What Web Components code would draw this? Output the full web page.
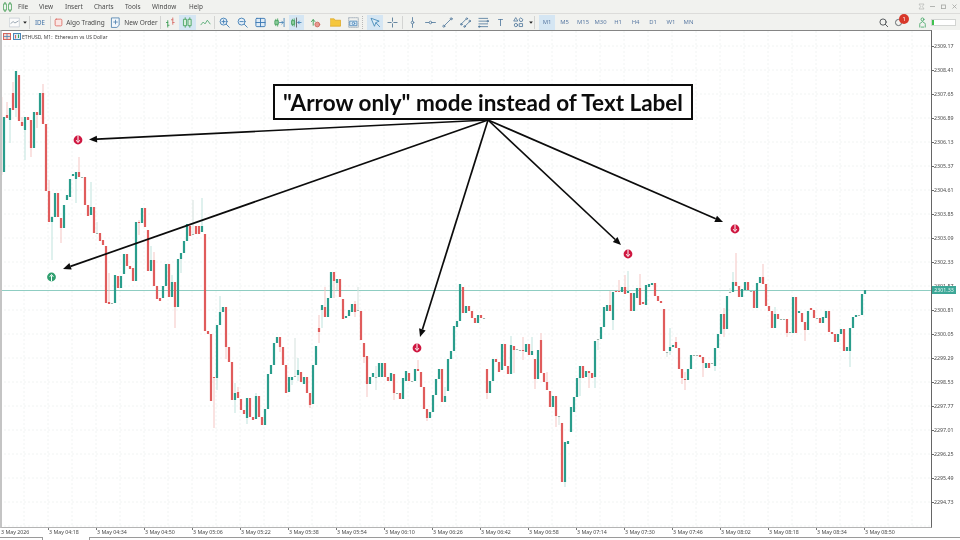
<!DOCTYPE html>
<html lang="en">
<head>
<meta charset="utf-8">
<title>ETHUSD M1</title>
<style>
  html, body { margin: 0; padding: 0; background: #fff; }
  body { font-family: "Noto Sans", "Liberation Sans", sans-serif; }
</style>
</head>
<body>
<mt-app>
  <mt-menubar></mt-menubar>
  <mt-toolbar></mt-toolbar>
  <mt-chart>
    <chart-note slot="note">"Arrow only" mode instead of Text Label</chart-note>
  </mt-chart>
  <mt-statusbar></mt-statusbar>
</mt-app>

<script>
class MtApp extends HTMLElement {
  constructor() {
    super();
    this.attachShadow({ mode: "open" });
    this.shadowRoot.innerHTML = `
      <style>
        :host { display: flex; flex-direction: column; width: 960px; height: 540px; overflow: hidden; background: #fff; filter: blur(.3px); }
      </style>
      <slot></slot>
    `;
  }
}

class MtMenubar extends HTMLElement {
  constructor() {
    super();
    this.attachShadow({ mode: "open" });
    this.shadowRoot.innerHTML = `
      <style>
        :host { display: flex; align-items: center; height: 13px; background: #f1f2ef; font: 6.4px "Noto Sans", "Liberation Sans", sans-serif; color: #4a4a4a; }
        .logo { width: 9px; height: 10px; margin: 0 6px 0 3px; }
        span { display: block; }
        .ctl { margin-left: auto; display: flex; align-items: center; }
        .ctl svg { width: 7px; height: 7px; margin-right: 4px; }
      </style>
      <svg class="logo" viewBox="0 0 9 10">
        <path d="M2 0v10M7 0v10" stroke="#3f9a4f" stroke-width="1"/>
        <rect x="0.7" y="2" width="2.6" height="6" fill="#fff" stroke="#3f9a4f" stroke-width=".8"/>
        <rect x="5.7" y="2" width="2.6" height="6" fill="#fff" stroke="#3f9a4f" stroke-width=".8"/>
      </svg>
      <span style="width:21px">File</span>
      <span style="width:26px">View</span>
      <span style="width:29px">Insert</span>
      <span style="width:31px">Charts</span>
      <span style="width:27px">Tools</span>
      <span style="width:37px">Window</span>
      <span>Help</span>
      <div class="ctl">
        <svg viewBox="0 0 7 7" fill="none" stroke="#b5b7b4" stroke-width=".7"><path d="M1 1h5L4.4 3.5 6 6H1l1.6-2.5z"/></svg>
        <svg viewBox="0 0 7 7" fill="none" stroke="#a3a5a2" stroke-width=".8"><path d="M1 3.5h5"/></svg>
        <svg viewBox="0 0 7 7" fill="none" stroke="#a3a5a2" stroke-width=".8"><rect x="1.5" y="2" width="4" height="3.6"/></svg>
        <svg viewBox="0 0 7 7" fill="none" stroke="#a3a5a2" stroke-width=".8" style="margin-right:2px"><path d="M1.5 1.5l4 4M5.5 1.5l-4 4"/></svg>
      </div>
    `;
  }
}

class ToolBtn extends HTMLElement {
  constructor() {
    super();
    this.attachShadow({ mode: "open" });
    this.shadowRoot.innerHTML = `
      <style>
        :host { display: flex; align-items: center; justify-content: center; gap: 3px; flex: none; height: 15px; box-sizing: border-box; font: 6.5px "Noto Sans", "Liberation Sans", sans-serif; color: #4a4a4a; white-space: nowrap; }
        :host([active]) { background: #d5e6f3; }
        :host([tf]) { font-size: 5.9px; color: #5a7aa3; }
      </style>
      <slot></slot>
    `;
  }
  connectedCallback() {
    this.style.width = this.getAttribute("w") + "px";
  }
}

class MtToolbar extends HTMLElement {
  constructor() {
    super();
    this.attachShadow({ mode: "open" });
    this.shadowRoot.innerHTML = `
      <style>
        :host { display: flex; align-items: center; height: 17px; padding: 0 4px 0 7px; box-sizing: border-box; background: #f1f2ef; border-top: 1px solid #dcdcda; }
        .sep { flex: none; width: 1px; height: 13px; background: #d3d4d2; }
        .dots { flex: none; width: 0; height: 13px; border-left: 1px dotted #b8b8b8; }
        svg { display: block; width: 11px; height: 11px; flex: none; fill: none; stroke-linecap: round; stroke-linejoin: round; }
        .right { margin-left: auto; display: flex; align-items: center; }
        .progress { width: 25px; height: 7px; box-sizing: border-box; border: 1px solid #d2d4d2; background: #fff; margin-left: 3px; display: flex; }
        .progress i { width: 2px; background: #3fc24e; }
        .chat { position: relative; width: 16px; height: 12px; margin: 0 7px 0 5px; }
        .chat svg { position: absolute; left: 0; top: 1px; }
        .badge { position: absolute; left: 5px; top: -2px; width: 10px; height: 10px; border-radius: 50%; background: #d8382a; color: #fff; font-size: 5.6px; line-height: 10px; text-align: center; }
      </style>
      <tool-btn w="22">
        <svg viewBox="0 0 12 12" stroke="#7f96ad" stroke-width=".8"><rect x=".7" y="1.2" width="10.6" height="9.6" fill="#fbfbfb" stroke="#c3cad2"/><path d="M2 7l2.5-2 2 1.5L10 4.5" stroke="#7a8a99"/></svg>
        <svg viewBox="0 0 4 12" style="width:4px"><path d="M0 5h4L2 7.4z" fill="#222"/></svg>
      </tool-btn>
      <i class="sep"></i>
      <tool-btn w="20" style="color:#3f70a6;font-size:6.2px">IDE</tool-btn>
      <i class="sep"></i>
      <tool-btn w="57">
        <svg viewBox="0 0 12 12" style="width:9px;height:9px"><rect x="1.5" y="1.5" width="9" height="9" rx="1.5" fill="#fbe6e4" stroke="#dd6a62" stroke-width="1.1"/></svg>
        Algo Trading
      </tool-btn>
      <tool-btn w="52">
        <svg viewBox="0 0 12 12" stroke="#4d7fae" stroke-width=".9"><path d="M2 1h8v8l-2.5 2.4H2z" fill="#f2f7fb"/><path d="M6 3.5v4M4 5.5h4"/></svg>
        New Order
      </tool-btn>
      <i class="sep"></i>
      <tool-btn w="18">
        <svg viewBox="0 0 12 12" stroke-width="1"><path d="M3 4v7M1.6 6H3M3 9h1.4" stroke="#3f9f57"/><path d="M8.5 1v7M7 3h1.5M8.5 6H10" stroke="#d9736c"/></svg>
      </tool-btn>
      <tool-btn w="17" active>
        <svg viewBox="0 0 12 12" stroke="#3f9f57" stroke-width=".9"><path d="M3.5 .8v10.4M8.5 .8v10.4"/><rect x="2" y="2.5" width="3" height="7" fill="#d8efdc"/><rect x="7" y="2.5" width="3" height="7" fill="#d8efdc"/></svg>
      </tool-btn>
      <tool-btn w="18">
        <svg viewBox="0 0 12 12" stroke-width=".9"><path d="M1 8.5l2.5-3L5.5 7.5 8 3.5 11 7.5" stroke="#4aa66b"/></svg>
      </tool-btn>
      <i class="sep"></i>
      <tool-btn w="18">
        <svg viewBox="0 0 12 12" stroke="#4480b5" stroke-width="1"><circle cx="5" cy="5" r="3.8" fill="#e6f0f8"/><path d="M8 8l3.2 3.2M3.2 5h3.6M5 3.2v3.6"/></svg>
      </tool-btn>
      <tool-btn w="18">
        <svg viewBox="0 0 12 12" stroke="#4480b5" stroke-width="1"><circle cx="5" cy="5" r="3.8" fill="#e6f0f8"/><path d="M8 8l3.2 3.2M3.2 5h3.6"/></svg>
      </tool-btn>
      <tool-btn w="18">
        <svg viewBox="0 0 12 12" stroke="#3b78b3" stroke-width="1"><rect x="1" y="1.5" width="10" height="9" rx="1" fill="#dfecf6"/><path d="M6 1.5v9M1 6h10"/></svg>
      </tool-btn>
      <tool-btn w="20">
        <svg viewBox="0 0 12 12" stroke-width=".9"><path d="M2 2.5v7M4 2v8" stroke="#3f9f57"/><rect x="1.3" y="4" width="3.4" height="4" fill="#8fce9f" stroke="#3f9f57"/><path d="M11 1.5v9M6 6h4M8.5 4.5L10 6 8.5 7.5" stroke="#3f7fb5"/></svg>
      </tool-btn>
      <tool-btn w="15" active>
        <svg viewBox="0 0 12 12" stroke-width=".9"><path d="M1.5 2.5v7M3.5 2v8" stroke="#3f9f57"/><rect x="1" y="4" width="3" height="4" fill="#8fce9f" stroke="#3f9f57"/><path d="M6 1v10" stroke="#555"/><path d="M11 6H7.5M9 4.5L7.5 6 9 7.5" stroke="#3f7fb5"/></svg>
      </tool-btn>
      <tool-btn w="22">
        <svg viewBox="0 0 12 12" stroke-width="1"><path d="M3.5 9V3M1.6 5L3.5 2.8 5.4 5" stroke="#3f9f57"/><circle cx="8" cy="8.2" r="2.6" fill="#e79a8f" stroke="#cf6a60"/></svg>
      </tool-btn>
      <tool-btn w="18">
        <svg viewBox="0 0 12 12"><path d="M.5 2h4l1 1.5h6V10H.5z" fill="#f5c73d" stroke="#dba520" stroke-width=".8"/></svg>
      </tool-btn>
      <tool-btn w="18">
        <svg viewBox="0 0 12 12" stroke="#4a86b8" stroke-width=".9"><rect x=".8" y=".8" width="10.4" height="10.4" stroke="#9aa8b5" stroke-dasharray="1 1"/><rect x="2.3" y="4.5" width="7.4" height="5" fill="#dcebf6"/><circle cx="6" cy="7" r="1.4"/></svg>
      </tool-btn>
      <i class="dots"></i>
      <tool-btn w="16" active style="margin-left:4px">
        <svg viewBox="0 0 12 12" stroke="#3e85b5" stroke-width=".9"><path d="M1.5 1.5l8.5 3-3.6 1.6-1.4 3.6z" fill="#dcecf7"/><path d="M6.6 6.4L10.5 10.5"/></svg>
      </tool-btn>
      <tool-btn w="19">
        <svg viewBox="0 0 12 12" stroke="#49708f" stroke-width=".9"><path d="M6 1v3.6M6 7.4V11M1 6h3.6M7.4 6H11"/></svg>
      </tool-btn>
      <i class="sep"></i>
      <tool-btn w="18">
        <svg viewBox="0 0 12 12" stroke="#50789c" stroke-width=".9"><path d="M6 .6v10.8"/><circle cx="6" cy="6" r="1.4" fill="#f1f2ef"/></svg>
      </tool-btn>
      <tool-btn w="18">
        <svg viewBox="0 0 12 12" stroke="#50789c" stroke-width=".9"><path d="M.6 6h10.8"/><circle cx="6" cy="6" r="1.4" fill="#f1f2ef"/></svg>
      </tool-btn>
      <tool-btn w="17">
        <svg viewBox="0 0 12 12" stroke="#50789c" stroke-width=".9"><path d="M2 10L10 2"/><circle cx="2" cy="10" r="1.1" fill="#f1f2ef"/><circle cx="10" cy="2" r="1.1" fill="#f1f2ef"/></svg>
      </tool-btn>
      <tool-btn w="18">
        <svg viewBox="0 0 12 12" stroke="#50789c" stroke-width=".9"><path d="M1.5 7.5l5-5M5.5 10l5-5"/><circle cx="7.4" cy="1.8" r=".9"/><circle cx="1.4" cy="8" r=".9"/><circle cx="10.6" cy="4.4" r=".9"/><circle cx="5" cy="10.4" r=".9"/></svg>
      </tool-btn>
      <tool-btn w="18">
        <svg viewBox="0 0 12 12" stroke="#50789c" stroke-width=".9"><path d="M1 1.5h9.5M1 4.5h9.5M1 7.5h9.5M1 10.5h9.5" /><circle cx="10.6" cy="4.5" r=".8"/><circle cx="1.4" cy="10.5" r=".8"/></svg>
      </tool-btn>
      <tool-btn w="17" style="color:#50789c;font-size:9px">T</tool-btn>
      <tool-btn w="18">
        <svg viewBox="0 0 12 12" stroke="#50789c" stroke-width=".9"><path d="M3.2 1L5.2 4.4H1.2zM8.8 1.2l2 1.6-.8 2H7.6l-.8-2z"/><circle cx="3.2" cy="8.8" r="1.8"/><rect x="7.2" y="7.2" width="3.2" height="3.2"/></svg>
      </tool-btn>
      <tool-btn w="7"><svg viewBox="0 0 4 12" style="width:4px"><path d="M0 5h4L2 7.4z" fill="#222"/></svg></tool-btn>
      <i class="sep"></i>
      <tool-btn w="16" tf active style="margin-left:4px">M1</tool-btn>
      <tool-btn w="19" tf>M5</tool-btn>
      <tool-btn w="18" tf>M15</tool-btn>
      <tool-btn w="17" tf>M30</tool-btn>
      <tool-btn w="18" tf>H1</tool-btn>
      <tool-btn w="17" tf>H4</tool-btn>
      <tool-btn w="18" tf>D1</tool-btn>
      <tool-btn w="18" tf>W1</tool-btn>
      <tool-btn w="17" tf>MN</tool-btn>
      <div class="right">
        <svg viewBox="0 0 12 12" stroke="#4a4f52" stroke-width="1"><circle cx="5.5" cy="5.5" r="3.4"/><path d="M8 8l2.6 2.6"/></svg>
        <div class="chat">
          <svg viewBox="0 0 12 12" stroke="#5a6064" stroke-width="1"><circle cx="5" cy="6" r="3.4"/></svg>
          <span class="badge">1</span>
        </div>
        <svg viewBox="0 0 12 12" stroke="#3fa562" stroke-width=".9"><circle cx="6" cy="2.6" r="1.6"/><path d="M2.8 7.4L6 5l3.2 2.4M3 11V8.4M9 11V8.4M4.6 11h2.8"/></svg>
        <div class="progress"><i></i></div>
      </div>
    `;
  }
}

const CANDLES = `r97 175,g117 172,r115 118 102,g108 120 108 143,r93 110 82,g71 108 71 117,r75 121,r122 126 117,g117 130 117 160,r117 120,r120 148 120 157,g112 148,r112 115 112 128,g93 115,r93 124 84,r124 191,r191 222 180,g217 222 216 260,g193 217,r193 217,r218 228 218 243,g205 228,g195 200,g179 197,g174 176,g172 179 172 203,r172 177 157,d177,r177 205,r205 216,g207 215 182,r207 233,d233 222,r233 241,r240 245,r246 303,r302 304 273,d303,g275 303,r276 288,g276 288,g254 274,r254 266,r266 269,r268 281,g222 281,r222 223 220 235,g208 223,r208 227,r230 271,g260 271 246,r260 286 252,r286 299,r298 301,g286 298,g264 286,r264 297,g282 297 275,r282 307 282 328,g259 307,g253 259 253 273,g241 253,g224 241,r226 236 224,d234 200,r226 234,r226 234,g226 232 198,r234 331,r331 334,r334 401,r377 378 377 428,g325 378 325 390,g312 325 296,g307 312,r307 347 307 359,r347 362,r362 400,g393 400 383 413,r392 398 387,r399 410,r410 414,g398 418 398 424,r398 417,r417 420,g396 419 393,r396 417,r417 425,g409 425,g374 409,g365 374,g343 365,g337 343,r337 347 337 352,r347 365,r365 393,g377 392,g377 380 377 385,d376 338,g370 375 358 381,r372 382,g377 384,r377 393,r393 405 393 408,g365 404,g346 365,r328 332 315 343,g305 310 305 328,r307 317 287,g298 317,g272 298,r272 281 272 298,g279 283 279 290,r279 297,r299 319,g316 318,g310 316,g304 312,r304 312 301 317,d310 287,r311 340,r343 357 343 363,r356 384 356 397,g377 384,g373 377,d377 366 390,g363 377,g363 377,r363 377,r377 381,g373 381,r374 393 374 400,d393,r393 399,g378 399,g371 381,r373 381,d381,g369 381,r369 371 360,r372 387,r387 409,r409 418 409 421,g412 418,g395 412,g379 395,g369 379,r369 402,g396 402 387,g359 391,g351 359,g326 351,g321 327,g284 321,r287 313,g306 313,r306 311,r311 318,r318 323,g315 323,r315 318,d318,r369 393 369 399,g381 393,g359 381,r359 362,r362 372,g344 370,r344 366,r366 374,g345 374 336,r346 350 346 373,d349,d350,r350 351 337 360,g344 352,r344 355,g351 355 337,r359 379 359 389,g350 379,r340 373 333,r373 382,r382 390 372,r391 407,g396 407,r396 416 396 427,d416 416 425,r423 482,g442 482 442 487,g441 444,g407 432,g397 412,g378 397,g366 378 366 396,r366 378,g371 377,r371 373 371 388,r373 378,g341 377 341 388,d339 339 350,g327 339,g307 327,g305 311,r305 311 291,g292 320 292 330,r291 292,r291 292 280,g287 292,r287 294 275,g291 293 271,r293 311,g293 311,g288 298,r288 305 274,r302 304,g285 305,g284 287,g283 285,r283 296,r296 301,r301 303,r309 351,d352 352 357,g347 351 328 355,g345 347,r342 348 337,r348 369,r369 378 369 384,r379 380 372 390,g369 380,g355 369,d355,d355,r355 357,r357 363 357 377,g363 368,r363 368,d363,g348 366 348 371,g334 348,g314 334,r314 329 308 337,g296 329,d292 288,g282 292 272,r282 286 253,r286 297,g289 297,g282 290,r282 290,d291,r291 308,g283 308,g277 283,r277 284 264,r284 306,r306 311,r311 328,g314 328 307,r314 319,d319,d319,r319 333 319 337,d332,g297 333,r297 333,g311 313,r313 322,r322 330 322 341,g311 330,r308 310,r310 318,d318,r318 323,g317 323,g311 318,r311 332,r332 334,r334 342,g334 342,g329 334,r329 351,g347 351,g328 351 328 367,g317 328,g315 317,d315,g294 315,g290 294`;

function candleSvg() {
  return CANDLES.split(",").map((s, i) => {
    const c = s[0];
    const n = s.slice(1).split(" ").map(Number);
    const x = 3 * i + 1;
    const top = n[0];
    const bot = c === "d" ? top + 1 : n[1];
    const hi = (c === "d" ? n[1] : n[2]) || top;
    const lo = (c === "d" ? n[2] : n[3]) || bot;
    const body = c === "g" ? "#2a9d8c" : c === "r" ? "#e05c5c" : "#9fb5ad";
    const wick = c === "g" ? "#bfe3dd" : c === "r" ? "#f6c6c4" : "#d5e2de";
    let out = "";
    if (hi < top || lo > bot) {
      out += `<rect x="${x - 0.5}" y="${hi}" width="1" height="${lo - hi}" fill="${wick}"/>`;
    }
    out += `<rect x="${x - 1.1}" y="${top}" width="2.2" height="${Math.max(bot - top, 1)}" fill="${body}"/>`;
    return out;
  }).join("");
}

function gridSvg() {
  let out = "";
  for (let x = 24; x < 931; x += 24) out += `<path d="M${x} 31V527" stroke="#f1f4f3" stroke-width="1" stroke-dasharray="2 2"/>`;
  for (let y = 46; y < 527; y += 24) out += `<path d="M0 ${y}H931" stroke="#f1f4f3" stroke-width="1" stroke-dasharray="2 2"/>`;
  return out;
}

function arrowSvg(x1, y1, x2, y2) {
  const a = Math.atan2(y2 - y1, x2 - x1);
  const len = 8, half = 3.4;
  const bx = x2 - len * Math.cos(a), by = y2 - len * Math.sin(a);
  const nx = -Math.sin(a) * half, ny = Math.cos(a) * half;
  return `<path d="M${x1} ${y1}L${bx.toFixed(1)} ${by.toFixed(1)}" stroke="#0c0c0c" stroke-width="1.7"/>` +
    `<path d="M${x2} ${y2}L${(bx + nx).toFixed(1)} ${(by + ny).toFixed(1)}L${(bx - nx).toFixed(1)} ${(by - ny).toFixed(1)}z" fill="#0c0c0c"/>`;
}

function markerSvg(x, y, up) {
  const fill = up ? "#2f9f6f" : "#cf1740";
  const d = up
    ? `M${x} ${y + 4.4}V${y - 1.5}M${x - 1.8} ${y - 0.2}L${x} ${y - 2.5}L${x + 1.8} ${y - 0.2}`
    : `M${x} ${y - 4.4}V${y + 1.5}M${x - 1.8} ${y + 0.2}L${x} ${y + 2.5}L${x + 1.8} ${y + 0.2}`;
  return `<circle cx="${x}" cy="${y}" r="4.4" fill="${fill}"/><path d="${d}" stroke="#fff" stroke-width="1" fill="none"/>`;
}

class MtChart extends HTMLElement {
  constructor() {
    super();
    this.attachShadow({ mode: "open" });
    const prices = [];
    for (let i = 0; i < 20; i++) prices.push((2309.17 - 0.76 * i).toFixed(2));
    const times = ["3 May 2026", "3 May 04:18", "3 May 04:34", "3 May 04:50", "3 May 05:06", "3 May 05:22", "3 May 05:38", "3 May 05:54", "3 May 06:10", "3 May 06:26", "3 May 06:42", "3 May 06:58", "3 May 07:14", "3 May 07:30", "3 May 07:46", "3 May 08:02", "3 May 08:18", "3 May 08:34", "3 May 08:50"];
    const arrows = [[89, 139.5], [63, 269], [420, 337], [621, 245], [723, 222]];
    this.shadowRoot.innerHTML = `
      <style>
        :host { display: grid; grid-template-columns: 932px 28px; grid-template-rows: 498px 9px; height: 507px; font: 5.3px "Noto Sans", "Liberation Sans", sans-serif; color: #4a4a4a; }
        .plot { position: relative; box-sizing: border-box; border-top: 1px solid #858585; border-right: 1px solid #666; border-bottom: 1px solid #b4b4b4; border-left: 2px solid #c4c4c4; overflow: hidden; }
        .plot svg { position: absolute; left: -2px; top: 0; width: 931px; height: 496px; }
        .title { position: absolute; left: 1px; top: 2px; display: flex; align-items: center; gap: 1.5px; font-size: 5px; color: #444; }
        .title svg { position: static; width: 8px; height: 7px; }
        .price { display: flex; flex-direction: column; padding-top: 4px; position: relative; }
        .price span { display: block; height: 24px; line-height: 24px; padding-left: 2px; position: relative; }
        .price span::before { content: ""; position: absolute; left: 0; top: 12px; width: 2px; height: 1px; background: #666; }
        .now { position: absolute; left: 0; top: 256px; width: 24px; height: 8px; line-height: 8px; background: #3ca797; color: #e8f6f3; text-align: center; }
        .time { display: flex; overflow: hidden; }
        .time span { display: block; flex: none; width: 48px; box-sizing: border-box; padding-left: 1px; line-height: 9px; position: relative; }
        .time span:not(:first-child)::before { content: ""; position: absolute; left: 0; top: 0; width: 1px; height: 2px; background: #777; }
      </style>
      <div class="plot">
        <svg viewBox="0 31 931 496">
          ${gridSvg()}
          <path d="M0 290.5H931" stroke="#8fcdc2" stroke-width="1"/>
          ${candleSvg()}
          ${arrows.map(a => arrowSvg(488, 120, a[0], a[1])).join("")}
          ${markerSvg(78, 140)}
          ${markerSvg(417, 348)}
          ${markerSvg(628, 254)}
          ${markerSvg(735, 229)}
          ${markerSvg(51.5, 277, true)}
        </svg>
        <div class="title">
          <svg viewBox="0 0 8 7"><rect x=".5" y=".5" width="7" height="6" fill="#f5d5cf" stroke="#d9655a"/><path d="M4 .5v6M.5 3.5h7" stroke="#4a86b8" stroke-width=".8"/></svg>
          <svg viewBox="0 0 8 7"><rect x=".5" y=".5" width="7" height="6" fill="#dcebf6" stroke="#4a86b8"/><path d="M2.5 2v3.5" stroke="#d9655a"/><path d="M5.5 1.5v3.5" stroke="#3f9f57"/></svg>
          <span>ETHUSD, M1:&nbsp; Ethereum vs US Dollar</span>
        </div>
        <slot name="note"></slot>
      </div>
      <div class="price">
        ${prices.map(p => `<span>${p}</span>`).join("")}
        <div class="now">2301.33</div>
      </div>
      <div class="time">${times.map(t => `<span>${t}</span>`).join("")}</div>
    `;
  }
}

class ChartNote extends HTMLElement {
  constructor() {
    super();
    this.attachShadow({ mode: "open" });
    this.shadowRoot.innerHTML = `
      <style>
        :host { position: absolute; left: 271px; top: 53px; width: 420px; height: 36px; box-sizing: border-box; display: flex; align-items: center; justify-content: center; background: #fff; border: 2px solid #0c0c0c; font: 700 22.5px Lato, "Open Sans", sans-serif; color: #0c0c0c; white-space: nowrap; }
      </style>
      <slot></slot>
    `;
  }
}

class MtStatusbar extends HTMLElement {
  constructor() {
    super();
    this.attachShadow({ mode: "open" });
    this.shadowRoot.innerHTML = `
      <style>
        :host { display: flex; height: 3px; background: #fff; }
        i { display: block; box-sizing: border-box; height: 3px; border-top: 1px solid #9a9a9a; }
        .gap { width: 48px; border-top: 0; border-left: 1px solid #9a9a9a; border-right: 1px solid #9a9a9a; }
      </style>
      <i style="width:42px"></i><i class="gap"></i><i style="flex:1"></i>
    `;
  }
}

customElements.define("mt-app", MtApp);
customElements.define("mt-menubar", MtMenubar);
customElements.define("tool-btn", ToolBtn);
customElements.define("mt-toolbar", MtToolbar);
customElements.define("mt-chart", MtChart);
customElements.define("chart-note", ChartNote);
customElements.define("mt-statusbar", MtStatusbar);
</script>
</body>
</html>
